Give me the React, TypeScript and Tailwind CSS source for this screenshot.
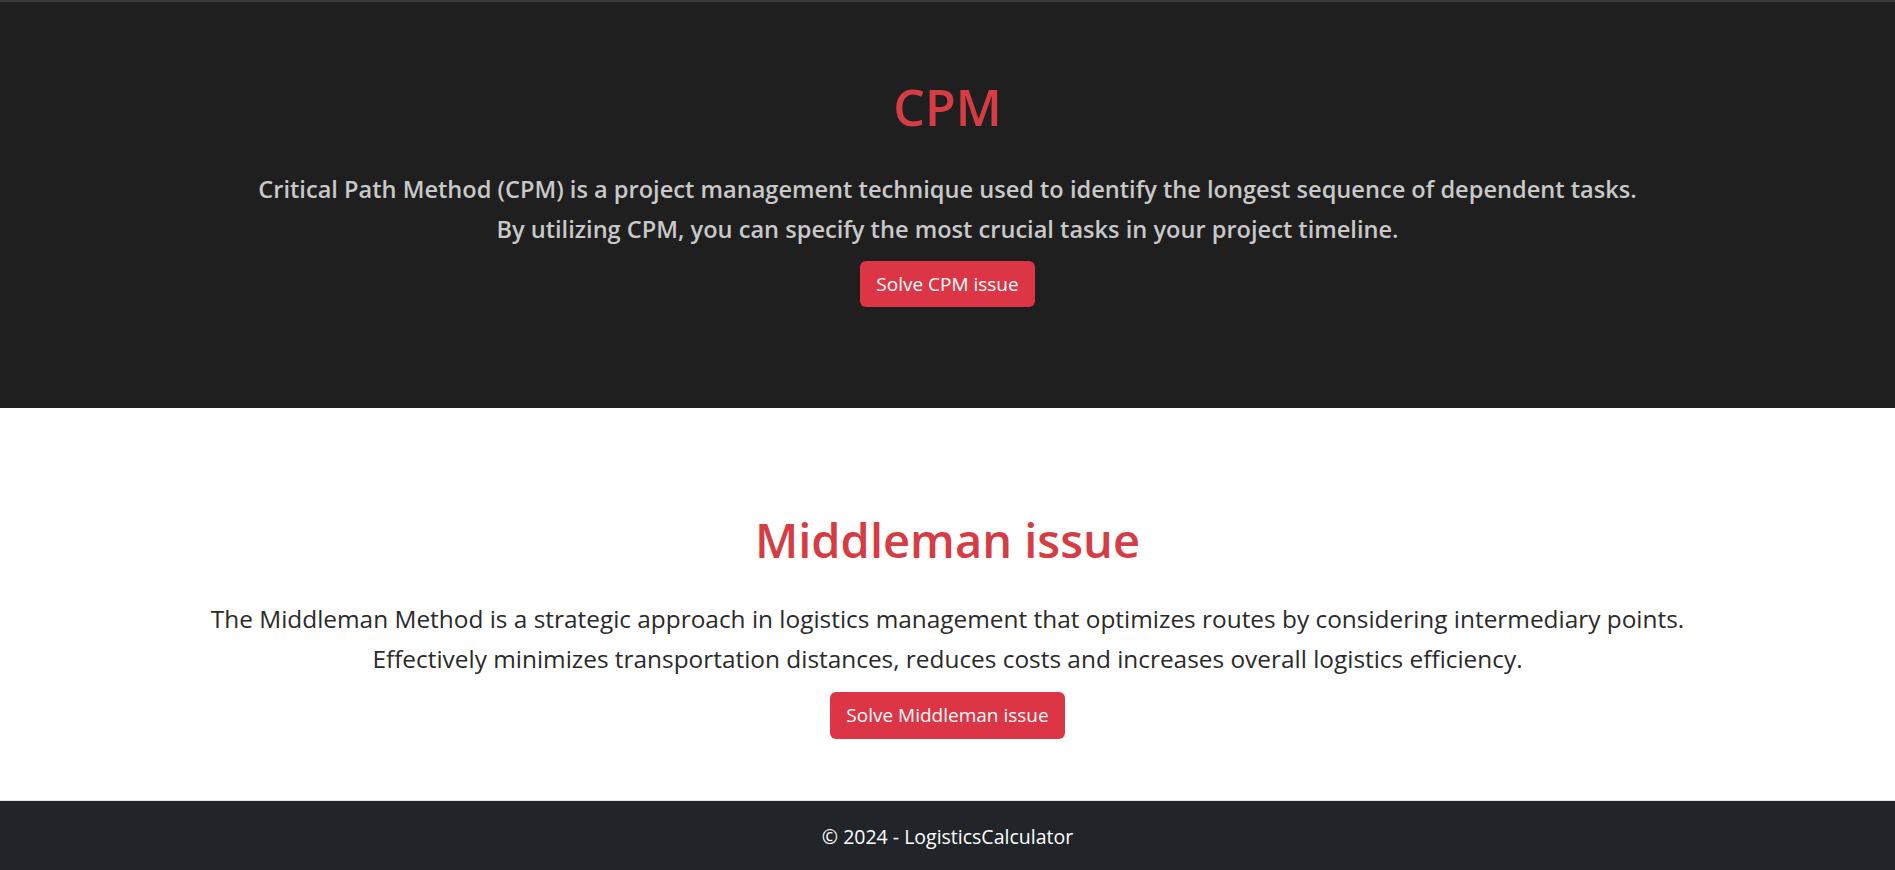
import React from "react";

export default function App() {
  const font = { fontFamily: '"Open Sans", "Noto Sans", sans-serif' };
  return (
    <div style={font} className="w-full min-h-[870px] flex flex-col bg-white">
      <section className="bg-[#1f1f1f] border-t-2 border-[#3a3a3a] h-[408px] flex flex-col items-center pt-[74px]">
        <h1 className="text-[50px] leading-[62px] font-semibold text-[#d63c43]">CPM</h1>
        <div className="mt-[31px] text-center text-[23.6px] leading-[40px] font-semibold text-[#c8c8c8]">
          <p>Critical Path Method (CPM) is a project management technique used to identify the longest sequence of dependent tasks.</p>
          <p>By utilizing CPM, you can specify the most crucial tasks in your project timeline.</p>
        </div>
        <button className="mt-[12px] h-[46px] px-[16px] rounded-[6px] bg-[#dc3545] text-white text-[19px]">Solve CPM issue</button>
      </section>
      <section className="h-[392px] flex flex-col items-center pt-[101px]">
        <h1 className="text-[47px] leading-[62px] font-semibold text-[#d63c43]">Middleman issue</h1>
        <div className="mt-[28px] text-center text-[24.4px] leading-[40px] font-medium text-[#2a2a2a]">
          <p>The Middleman Method is a strategic approach in logistics management that optimizes routes by considering intermediary points.</p>
          <p>Effectively minimizes transportation distances, reduces costs and increases overall logistics efficiency.</p>
        </div>
        <button className="mt-[13px] h-[47px] px-[16px] rounded-[6px] bg-[#dc3545] text-white text-[19px]">Solve Middleman issue</button>
      </section>
      <footer className="border-t border-[#dee2e6] bg-[#212529] h-[70px] pt-[3px] flex items-center justify-center text-white text-[19.5px]">
        © 2024 - LogisticsCalculator
      </footer>
    </div>
  );
}
